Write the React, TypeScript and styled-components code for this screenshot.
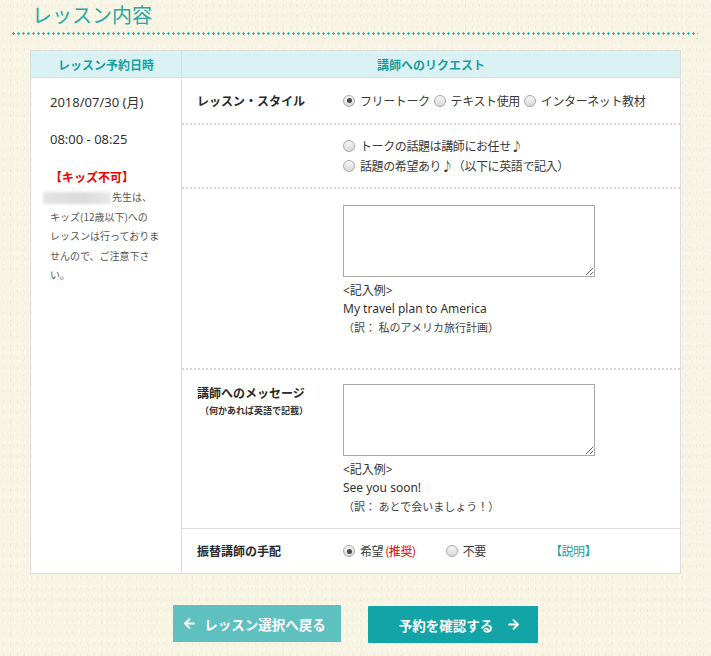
import React from "react";
import styled, { createGlobalStyle } from "styled-components";
import { ArrowLeft, ArrowRight } from "lucide-react";

const GlobalStyle = createGlobalStyle`
  html, body { margin: 0; padding: 0; }
  body {
    width: 711px;
    min-height: 656px;
    background-color: #f8f4e3;
    background-image:
      radial-gradient(rgba(175, 162, 125, 0.12) 0.6px, transparent 1px),
      radial-gradient(rgba(175, 162, 125, 0.10) 0.6px, transparent 1px),
      radial-gradient(rgba(255, 255, 255, 0.45) 0.7px, transparent 1.1px);
    background-size: 7px 11px, 13px 5px, 5px 9px;
    background-position: 0 0, 4px 3px, 2px 6px;
    font-family: "Noto Sans", "Noto Sans CJK JP", sans-serif;
    color: #333;
  }
`;

const Page = styled.div`
  padding-top: 2px;
  padding-bottom: 11px;
`;

const Title = styled.h2`
  margin: 0 0 0 32px;
  font-size: 20px;
  line-height: 26px;
  font-weight: normal;
  color: #25a8a6;
  font-family: "Noto Sans CJK JP", sans-serif;
`;

const DotLine = styled.div`
  margin: 4px 13px 0 11px;
  height: 3px;
  background-image: radial-gradient(circle, #35b6b0 1.1px, transparent 1.4px);
  background-size: 5px 3px;
`;

const Table = styled.div`
  margin: 15px 0 0 30px;
  width: 651px;
  box-sizing: border-box;
  border: 1px solid #dcdcdc;
  background: #fff;
  display: grid;
  grid-template-columns: 150px 1fr;
`;

const HeaderCell = styled.div<{ $divider?: boolean }>`
  height: 26px;
  background: #dbf2f5;
  border-bottom: 1px solid #dcdcdc;
  border-left: ${(p) => (p.$divider ? "1px solid #dcdcdc" : "none")};
  display: flex;
  align-items: center;
  justify-content: center;
  font-family: "Noto Sans CJK JP", sans-serif;
  font-size: 12px;
  font-weight: bold;
  color: #1a9f9f;
`;

const LeftCell = styled.div`
  padding: 15px 8px 0 19px;
`;

const DateLine = styled.div<{ $gap?: number }>`
  margin-top: ${(p) => p.$gap ?? 0}px;
  font-size: 13px;
  line-height: 18px;
  color: #333;
`;

const Warn = styled.div`
  margin-top: 20px;
  font-family: "Noto Sans CJK JP", sans-serif;
  font-size: 12px;
  font-weight: bold;
  line-height: 18px;
  color: #ee0000;
`;

const Notice = styled.p`
  margin: 1px 0 0;
  font-family: "Noto Sans CJK JP", sans-serif;
  font-size: 10px;
  line-height: 19.5px;
  color: #555;
  white-space: nowrap;
`;

const BlurName = styled.span`
  display: inline-block;
  vertical-align: middle;
  margin-left: -7px;
  margin-right: 1px;
  width: 68px;
  height: 12px;
  background: linear-gradient(90deg, #e4e4e4, #dadada 60%, #e8e8e8);
  filter: blur(1.5px);
`;

const RightCell = styled.div`
  border-left: 1px solid #dcdcdc;
  display: flex;
  flex-direction: column;
`;

const Row = styled.div<{ $line?: "dotted" | "solid" | "none"; $h?: number; $pad?: string }>`
  display: grid;
  grid-template-columns: 161px 1fr;
  align-items: ${(p) => (p.$h ? "center" : "start")};
  height: ${(p) => (p.$h ? `${p.$h}px` : "auto")};
  padding: ${(p) => p.$pad ?? "0"};
  border-bottom: ${(p) =>
    p.$line === "dotted" ? "2px dotted #d6d6d6" : p.$line === "solid" ? "1px solid #dcdcdc" : "none"};
`;

const Label = styled.div`
  padding-left: 15px;
  font-family: "Noto Sans CJK JP", sans-serif;
  font-size: 12px;
  font-weight: bold;
  line-height: 18px;
  color: #2a2a2a;
`;

const SubLabel = styled.div`
  margin-top: 2px;
  padding-left: 3px;
  font-size: 9px;
  line-height: 14px;
  font-weight: bold;
  color: #333;
`;

const Options = styled.div<{ $column?: boolean }>`
  display: flex;
  flex-direction: ${(p) => (p.$column ? "column" : "row")};
  align-items: ${(p) => (p.$column ? "flex-start" : "center")};
  font-family: "Noto Sans CJK JP", sans-serif;
  font-size: 12px;
  letter-spacing: -0.4px;
  line-height: 20px;
  color: #3a3a3a;
`;

const Option = styled.label<{ $ml?: number }>`
  display: inline-flex;
  align-items: center;
  gap: 5px;
  margin-left: ${(p) => p.$ml ?? 0}px;
  margin-right: 4px;
  white-space: nowrap;
`;

const Radio = styled.span<{ $checked?: boolean }>`
  position: relative;
  width: 12px;
  height: 12px;
  box-sizing: border-box;
  border-radius: 50%;
  border: 1px solid #a9a9a9;
  background: linear-gradient(#f6f6f6, #d9d9d9);
  flex: none;
  &::after {
    content: "";
    display: ${(p) => (p.$checked ? "block" : "none")};
    position: absolute;
    left: 2.5px;
    top: 2.5px;
    width: 5px;
    height: 5px;
    border-radius: 50%;
    background: #4a4a4a;
  }
`;

const Red = styled.span`
  color: #e00000;
  margin-left: -2px;
`;

const Link = styled.span<{ $ml?: number }>`
  margin-left: ${(p) => p.$ml ?? 0}px;
  color: #17a2a4;
`;

const Field = styled.div``;

const TextArea = styled.textarea`
  display: block;
  width: 252px;
  height: 72px;
  box-sizing: border-box;
  border: 1px solid #a8a8a8;
  background: #fff;
  margin: 0;
  padding: 2px;
  font-family: "Noto Sans", sans-serif;
`;

const Notes = styled.div`
  margin-top: 5px;
  font-size: 12px;
  line-height: 18px;
  color: #333;
`;

const NoteLine = styled.div<{ $small?: boolean }>`
  font-family: ${(p) => (p.$small ? '"Noto Sans CJK JP", sans-serif' : '"Noto Sans", "Noto Sans CJK JP", sans-serif')};
  font-size: ${(p) => (p.$small ? "11px" : "12px")};
  color: ${(p) => (p.$small ? "#444" : "#333")};
`;

const Buttons = styled.div`
  margin-top: 31px;
  display: flex;
  justify-content: center;
  align-items: flex-start;
  gap: 27px;
`;

const Button = styled.button<{ $primary?: boolean }>`
  width: ${(p) => (p.$primary ? 170 : 168)}px;
  height: 37px;
  margin-top: ${(p) => (p.$primary ? 1 : 0)}px;
  border: none;
  border-radius: 1px;
  background: ${(p) => (p.$primary ? "#13a4a7" : "#5ec0bf")};
  color: #fff;
  font-family: "Noto Sans CJK JP", sans-serif;
  font-size: 13.5px;
  font-weight: bold;
  display: flex;
  align-items: center;
  justify-content: center;
  gap: ${(p) => (p.$primary ? 13 : 7)}px;
  padding: 0;
  padding-left: ${(p) => (p.$primary ? 14 : 0)}px;
  padding-right: ${(p) => (p.$primary ? 0 : 6)}px;
  cursor: pointer;
`;

const Example = ({ lines }: { lines: [string, string, string] }) => (
  <Notes>
    <NoteLine>{lines[0]}</NoteLine>
    <NoteLine>{lines[1]}</NoteLine>
    <NoteLine $small>{lines[2]}</NoteLine>
  </Notes>
);

export default function App() {
  return (
    <Page>
      <GlobalStyle />
      <Title>レッスン内容</Title>
      <DotLine />
      <Table>
        <HeaderCell>レッスン予約日時</HeaderCell>
        <HeaderCell $divider>講師へのリクエスト</HeaderCell>
        <LeftCell>
          <DateLine>2018/07/30 (月)</DateLine>
          <DateLine $gap={19}>08:00 - 08:25</DateLine>
          <Warn>【キッズ不可】</Warn>
          <Notice>
            <BlurName />先生は、
            <br />
            キッズ(12歳以下)への
            <br />
            レッスンは行っておりま
            <br />
            せんので、ご注意下さ
            <br />
            い。
          </Notice>
        </LeftCell>
        <RightCell>
          <Row $line="dotted" $h={45}>
            <Label>レッスン・スタイル</Label>
            <Options>
              <Option>
                <Radio $checked />
                フリートーク
              </Option>
              <Option>
                <Radio />
                テキスト使用
              </Option>
              <Option>
                <Radio />
                インターネット教材
              </Option>
            </Options>
          </Row>
          <Row $line="dotted" $h={62}>
            <div />
            <Options $column>
              <Option>
                <Radio />
                トークの話題は講師にお任せ♪
              </Option>
              <Option>
                <Radio />
                話題の希望あり♪（以下に英語で記入）
              </Option>
            </Options>
          </Row>
          <Row $line="dotted" $pad="16px 0 32px">
            <div />
            <Field>
              <TextArea />
              <Example lines={["<記入例>", "My travel plan to America", "（訳： 私のアメリカ旅行計画）"]} />
            </Field>
          </Row>
          <Row $line="solid" $pad="14px 0 13px">
            <Label>
              講師へのメッセージ
              <SubLabel>（何かあれば英語で記載）</SubLabel>
            </Label>
            <Field>
              <TextArea />
              <Example lines={["<記入例>", "See you soon!", "（訳： あとで会いましょう！）"]} />
            </Field>
          </Row>
          <Row $h={44}>
            <Label>振替講師の手配</Label>
            <Options>
              <Option>
                <Radio $checked />
                希望
              </Option>
              <Red>(推奨)</Red>
              <Option $ml={30}>
                <Radio />
                不要
              </Option>
              <Link $ml={60}>【説明】</Link>
            </Options>
          </Row>
        </RightCell>
      </Table>
      <Buttons>
        <Button>
          <ArrowLeft size={15} strokeWidth={3} />
          レッスン選択へ戻る
        </Button>
        <Button $primary>
          予約を確認する
          <ArrowRight size={15} strokeWidth={3} />
        </Button>
      </Buttons>
    </Page>
  );
}
